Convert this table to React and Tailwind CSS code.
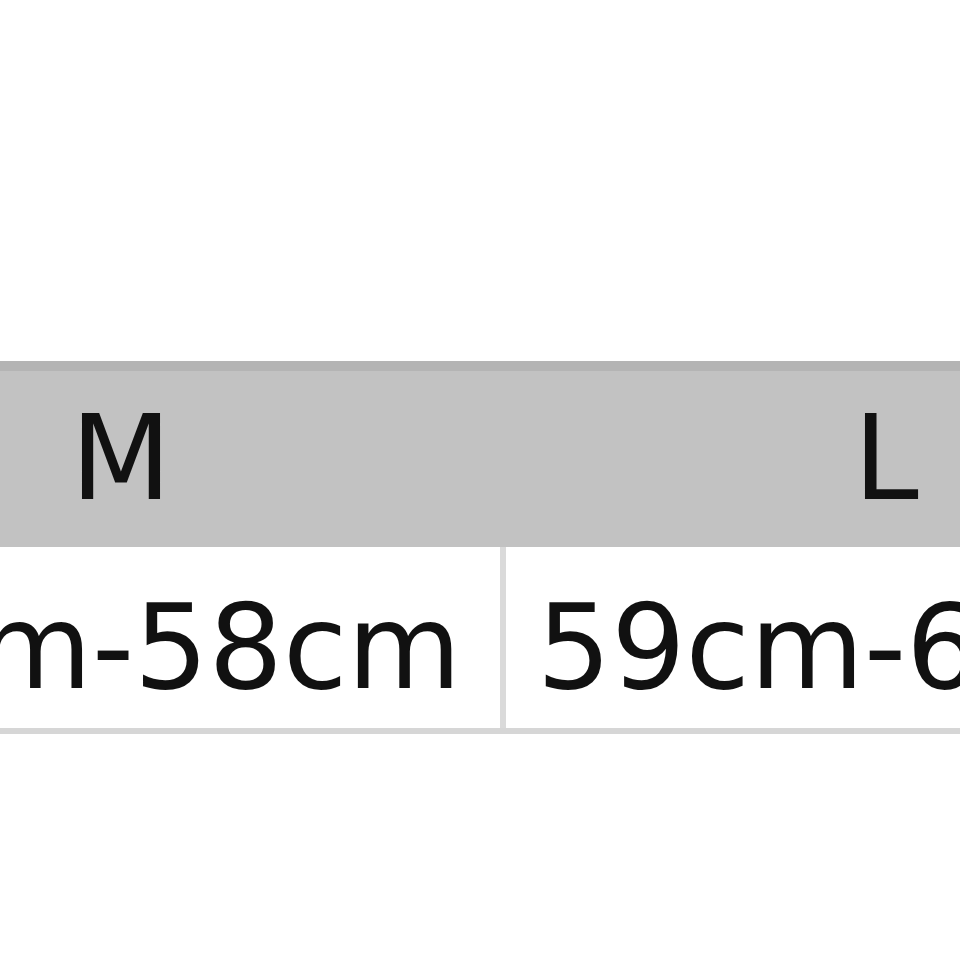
export default function App() {
  const font = { fontFamily: '"DejaVu Sans", Verdana, sans-serif' };
  return (
    <div className="w-[960px] h-[960px] bg-white overflow-hidden pt-[361px]" style={font}>
      <div className="ml-[-258px] w-[1530px]">
        <div className="flex h-[186px] border-t-[10px] border-[#b4b4b4] bg-[#c2c2c2] text-[117px] text-[#111111]">
          <div className="w-[758px] flex items-center justify-center">M</div>
          <div className="w-[6px]"></div>
          <div className="w-[760px] flex items-center justify-center">L</div>
        </div>
        <div className="flex h-[187px] border-b-[6px] border-[#d6d6d6] bg-white text-[117px] text-[#111111]">
          <div className="w-[758px] flex items-center justify-center pt-[20px] pr-[16px]">55cm-58cm</div>
          <div className="w-[6px] bg-[#dadada]"></div>
          <div className="w-[760px] flex items-center justify-center pt-[20px] pr-[2px]">59cm-62cm</div>
        </div>
      </div>
    </div>
  );
}
